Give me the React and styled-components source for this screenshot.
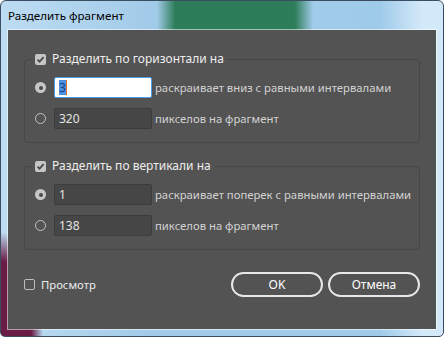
import React from 'react';
import styled, { createGlobalStyle } from 'styled-components';

const GlobalStyle = createGlobalStyle`
  html, body {
    margin: 0;
    padding: 0;
    background: #ffffff;
  }
  body {
    font-family: "Noto Sans", "DejaVu Sans", sans-serif;
  }
`;

const Window = styled.div`
  width: 444px;
  height: 337px;
  box-sizing: border-box;
  display: flex;
  flex-direction: column;
  border: 1px solid #3b4d60;
  border-radius: 6px 6px 5px 5px;
  overflow: hidden;
  background:
    radial-gradient(ellipse 42px 104px at 0 100%, #6a1c47 0, #6a1c47 72%, rgba(106, 28, 71, 0) 100%),
    linear-gradient(90deg, rgba(46, 125, 90, 0) 156px, #2e7d5a 174px, #2e7d5a 294px, rgba(46, 125, 90, 0) 312px) top / 100% 29px no-repeat,
    linear-gradient(90deg, #bddcf2 0, #a2cbe9 150px, #9fcbea 380px, #d3e8f8 420px);
`;

const TitleBar = styled.div`
  height: 29px;
  flex: none;
  display: flex;
  align-items: center;
  padding-left: 7px;
  font-size: 11.6px;
  color: #000000;
`;

const Client = styled.div`
  flex: 1;
  margin: 0 7px 7px;
  background: #535353;
  box-shadow: 0 0 0 1px rgba(255, 255, 255, 0.55);
  padding: 21px 16px 0;
  display: flex;
  flex-direction: column;
  gap: 15px;
  font-size: 11.3px;
`;

const Group = styled.fieldset`
  margin: 0;
  min-width: 0;
  padding: 10px 0 13px 7px;
  border: 1px solid #474747;
  border-radius: 4px;
`;

const Legend = styled.legend`
  display: flex;
  align-items: center;
  gap: 6px;
  height: 16px;
  line-height: 16px;
  padding: 0 3px;
  font-size: 12px;
  color: #eeeeee;
`;

const CheckBox = styled.span`
  width: 11px;
  height: 11px;
  box-sizing: border-box;
  border-radius: 2px;
  display: flex;
  align-items: center;
  justify-content: center;
  background: ${p => (p.$checked ? '#c6c6c6' : 'transparent')};
  border: ${p => (p.$checked ? 'none' : '1px solid #bdbdbd')};
`;

const Rows = styled.div`
  display: flex;
  flex-direction: column;
  gap: 10px;
  padding-left: 3px;
`;

const Row = styled.div`
  display: flex;
  align-items: center;
  height: 21px;
`;

const Radio = styled.span`
  width: 11px;
  height: 11px;
  box-sizing: border-box;
  border-radius: 50%;
  margin-right: 8px;
  display: flex;
  align-items: center;
  justify-content: center;
  background: ${p => (p.$on ? '#c6c6c6' : 'transparent')};
  border: ${p => (p.$on ? 'none' : '1.5px solid #c2c2c2')};

  &::after {
    content: '';
    display: ${p => (p.$on ? 'block' : 'none')};
    width: 4px;
    height: 4px;
    border-radius: 50%;
    background: #4a4a4a;
  }
`;

const Field = styled.div`
  width: 98px;
  height: 21px;
  box-sizing: border-box;
  padding: 0 4px;
  border-radius: 2px;
  line-height: 19px;
  font-size: 12px;
  background: ${p => (p.$focused ? '#ffffff' : '#464646')};
  border: 1px solid ${p => (p.$focused ? '#4d9be6' : '#3c3c3c')};
  color: #e4e4e4;
`;

const Selected = styled.span`
  display: inline-block;
  line-height: 15px;
  background: #4a90e2;
  color: #1d3f7c;
  border-right: 1px solid #e07028;
`;

const RowLabel = styled.span`
  margin-left: 3px;
  color: #d2d2d2;
  white-space: nowrap;
`;

const Footer = styled.div`
  margin-top: 7px;
  height: 25px;
  display: flex;
  align-items: center;
`;

const Preview = styled.label`
  display: flex;
  align-items: center;
  gap: 6px;
  margin-right: auto;
  color: #ececec;
`;

const Buttons = styled.div`
  display: flex;
  gap: 5px;
`;

const Button = styled.button`
  width: 92px;
  height: 25px;
  box-sizing: border-box;
  border: 2px solid #e8e8e8;
  border-radius: 13px;
  background: transparent;
  color: #ffffff;
  font-family: inherit;
  font-size: 12px;
  font-weight: 400;
  padding: 0;
`;

const Check = () => (
  <svg width="9" height="9" viewBox="0 0 9 9">
    <path d="M1.5 4.6 L3.6 6.7 L7.6 2.2" fill="none" stroke="#4c4c4c" strokeWidth="1.8" />
  </svg>
);

const SplitGroup = ({ title, count, countLabel, pixels }) => (
  <Group>
    <Legend>
      <CheckBox $checked>
        <Check />
      </CheckBox>
      {title}
    </Legend>
    <Rows>
      <Row>
        <Radio $on />
        <Field $focused={count.focused}>
          {count.focused ? <Selected>{count.value}</Selected> : count.value}
        </Field>
        <RowLabel>{countLabel}</RowLabel>
      </Row>
      <Row>
        <Radio />
        <Field>{pixels}</Field>
        <RowLabel>пикселов на фрагмент</RowLabel>
      </Row>
    </Rows>
  </Group>
);

export default function App() {
  return (
    <>
      <GlobalStyle />
      <Window>
        <TitleBar>Разделить фрагмент</TitleBar>
        <Client>
          <SplitGroup
            title="Разделить по горизонтали на"
            count={{ value: '3', focused: true }}
            countLabel="раскраивает вниз с равными интервалами"
            pixels="320"
          />
          <SplitGroup
            title="Разделить по вертикали на"
            count={{ value: '1', focused: false }}
            countLabel="раскраивает поперек с равными интервалами"
            pixels="138"
          />
          <Footer>
            <Preview>
              <CheckBox />
              Просмотр
            </Preview>
            <Buttons>
              <Button>OK</Button>
              <Button>Отмена</Button>
            </Buttons>
          </Footer>
        </Client>
      </Window>
    </>
  );
}
